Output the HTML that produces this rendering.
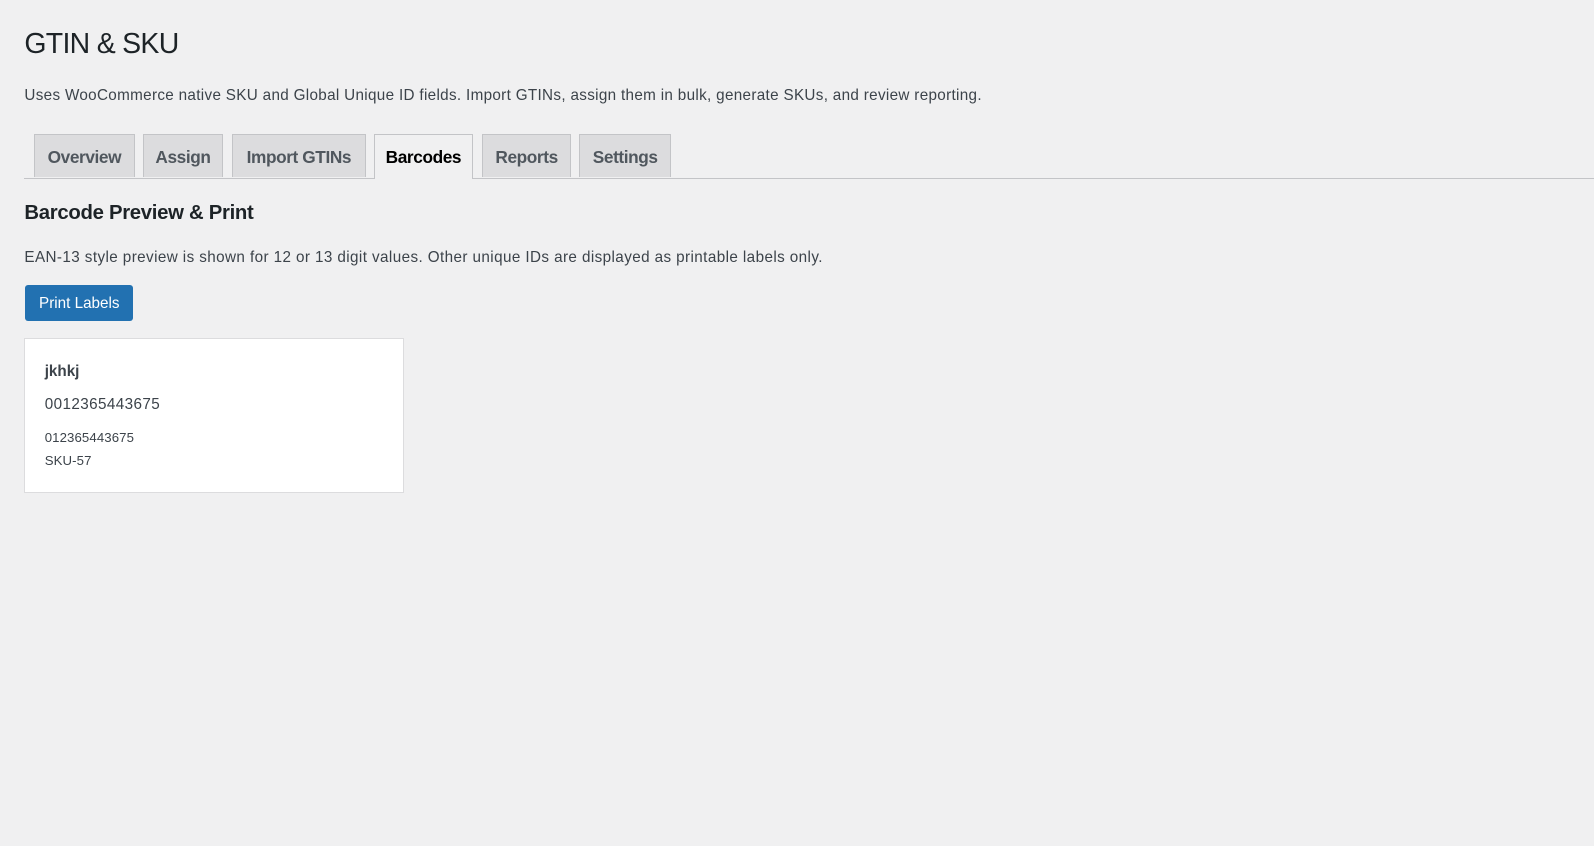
<!DOCTYPE html>
<html><head><meta charset="utf-8"><style>
html,body{margin:0;padding:0;background:#f0f0f1;}
body{width:1568px;height:832px;zoom:1.0166;overflow:hidden;font-family:"Liberation Sans",sans-serif;color:#3c434a;position:relative;}
.a{position:absolute;white-space:nowrap;}
h1{position:absolute;left:24px;top:28px;margin:0;font-size:28px;font-weight:400;color:#1d2327;line-height:32px;letter-spacing:-0.7px;}
.desc{left:24px;top:86px;font-size:15px;letter-spacing:0.32px;}
.line{position:absolute;left:24px;right:0;top:175px;height:1px;background:#c3c4c7;}
.tab{position:absolute;top:132px;height:42px;background:#dcdcde;border:1px solid #c3c4c7;border-bottom:none;box-sizing:border-box;font-size:17px;font-weight:700;color:#50575e;text-align:center;line-height:44px;letter-spacing:-0.4px;}
.tab.on{background:#f0f0f1;color:#000;height:44px;}
h2{position:absolute;left:24px;top:199px;margin:0;font-size:20px;font-weight:700;color:#1d2327;letter-spacing:-0.3px;}
.p{left:24px;top:245px;font-size:15px;letter-spacing:0.4px;}
.btn{position:absolute;left:25px;top:280px;width:106px;height:36px;background:#2271b1;border-radius:3px;color:#fff;font-size:15px;line-height:37px;text-align:center;letter-spacing:0px;}
.card{position:absolute;left:24px;top:332px;width:373px;height:153px;background:#fff;border:1px solid #dcdcde;box-sizing:border-box;}
</style></head><body>
<h1>GTIN &amp; SKU</h1>
<div class="a desc">Uses WooCommerce native SKU and Global Unique ID fields. Import GTINs, assign them in bulk, generate SKUs, and review reporting.</div>
<div class="line"></div>
<div class="tab" style="left:33px;width:100px">Overview</div>
<div class="tab" style="left:141px;width:78px">Assign</div>
<div class="tab" style="left:228px;width:132px">Import GTINs</div>
<div class="tab on" style="left:368px;width:97px">Barcodes</div>
<div class="tab" style="left:474px;width:88px">Reports</div>
<div class="tab" style="left:570px;width:90px">Settings</div>
<h2>Barcode Preview &amp; Print</h2>
<div class="a p">EAN-13 style preview is shown for 12 or 13 digit values. Other unique IDs are displayed as printable labels only.</div>
<div class="btn">Print Labels</div>
<div class="card">
<div class="a" style="left:19px;top:24px;font-size:15px;font-weight:700;letter-spacing:0px">jkhkj</div>
<div class="a" style="left:19px;top:57px;font-size:15px;letter-spacing:0.4px">0012365443675</div>
<div class="a" style="left:19px;top:90px;font-size:13px;letter-spacing:0.1px">012365443675</div>
<div class="a" style="left:19px;top:113px;font-size:13px;letter-spacing:0.1px">SKU-57</div>
</div>
</body></html>
